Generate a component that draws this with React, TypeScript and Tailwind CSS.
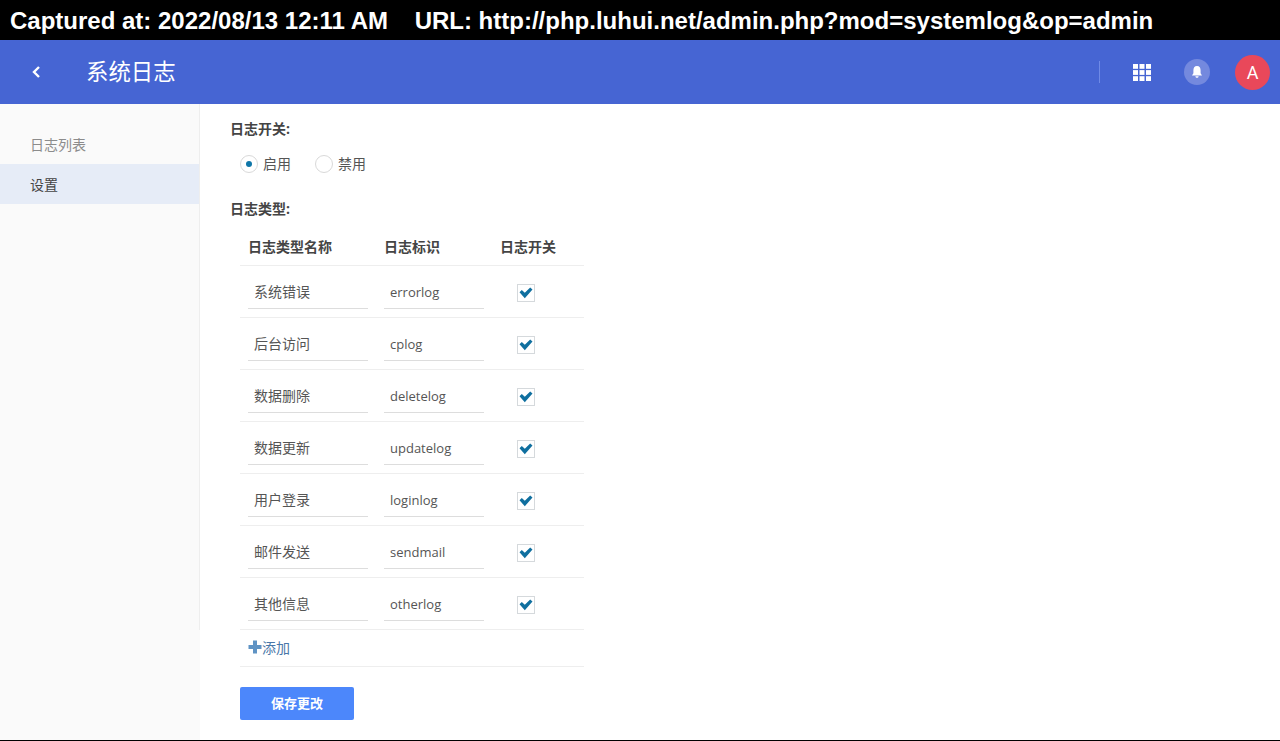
import React from 'react';

const rows = [
  { name: '系统错误', key: 'errorlog' },
  { name: '后台访问', key: 'cplog' },
  { name: '数据删除', key: 'deletelog' },
  { name: '数据更新', key: 'updatelog' },
  { name: '用户登录', key: 'loginlog' },
  { name: '邮件发送', key: 'sendmail' },
  { name: '其他信息', key: 'otherlog' },
];

const font = 'font-["Open_Sans","Noto_Sans_CJK_SC",sans-serif]';

const Check = () => (
  <div className="w-[18px] h-[18px] border border-[#d5d9dc] bg-white flex items-center justify-center">
    <svg width="14" height="12" viewBox="0 0 14 12">
      <path d="M0.5 5.2 L2.8 3 L5.8 5.8 L11.2 0.4 L13.5 2.6 L5.8 11.2 Z" fill="#0f6f9f" />
    </svg>
  </div>
);

const Radio = ({ on, label }: { on?: boolean; label: string }) => (
  <div className="flex items-center gap-[5px]">
    <div className="w-[18px] h-[18px] rounded-full border border-[#d9d9d9] bg-white flex items-center justify-center">
      {on && <div className="w-[6px] h-[6px] rounded-full bg-[#0f76a8]" />}
    </div>
    <span className="text-[14px] leading-[16px] text-[#555]">{label}</span>
  </div>
);

export default function App() {
  return (
    <div className={`h-[741px] overflow-hidden flex flex-col bg-white ${font}`}>
      <div className='h-[40px] shrink-0 bg-black text-white font-["Liberation_Sans",sans-serif] font-bold text-[24px] leading-[42px] pl-[10px] whitespace-pre'>
        Captured at: 2022/08/13 12:11 AM    URL: http://php.luhui.net/admin.php?mod=systemlog&amp;op=admin
      </div>

      <div className="h-[64px] shrink-0 bg-[#4665d3] flex items-center text-white">
        <div className="w-[86px] pl-[30px] shrink-0">
          <svg width="12" height="14" viewBox="0 0 12 14" fill="none" stroke="white" strokeWidth="2.4">
            <path d="M9 2 L4 7 L9 12" />
          </svg>
        </div>
        <div className="text-[22.4px] leading-[28px] flex-1">系统日志</div>
        <div className="w-px h-[22px] bg-[#6f8ae6] mr-[33px]" />
        <svg width="18" height="17" viewBox="0 0 18 17" fill="white" className="mr-[33px]">
          <rect x="0" y="0" width="5" height="4.8" />
          <rect x="6.5" y="0" width="5" height="4.8" />
          <rect x="13" y="0" width="5" height="4.8" />
          <rect x="0" y="6.1" width="5" height="4.8" />
          <rect x="6.5" y="6.1" width="5" height="4.8" />
          <rect x="13" y="6.1" width="5" height="4.8" />
          <rect x="0" y="12.2" width="5" height="4.8" />
          <rect x="6.5" y="12.2" width="5" height="4.8" />
          <rect x="13" y="12.2" width="5" height="4.8" />
        </svg>
        <div className="w-[26px] h-[26px] rounded-full bg-[#7489de] flex items-center justify-center mr-[25px]">
          <svg width="14" height="14" viewBox="0 0 14 14" fill="white">
            <path d="M7 1 C9.6 1 10.6 3 10.6 5.4 L10.6 8.2 L12 10.4 L2 10.4 L3.4 8.2 L3.4 5.4 C3.4 3 4.4 1 7 1 Z" />
            <path d="M5.4 11.2 L8.6 11.2 C8.4 13.2 5.6 13.2 5.4 11.2 Z" />
          </svg>
        </div>
        <div className='w-[35px] h-[35px] rounded-full bg-[#e9485a] flex items-center justify-center mr-[10px] text-[18px] font-["Roboto",sans-serif]'>
          A
        </div>
      </div>

      <div className="flex-1 flex min-h-0">
        <div className="w-[200px] shrink-0 bg-[#fafafa] pt-[20px] text-[14px] relative">
          <div className="h-[40px] pl-[30px] flex items-center text-[#8c8c8c]">日志列表</div>
          <div className="h-[40px] pl-[30px] flex items-center text-[#444] bg-[#e6ecf7]">设置</div>
          <div className="absolute right-0 top-0 h-[526px] w-px bg-[#eeeeee]" />
        </div>

        <div className="flex-1 pl-[30px]">
          <div className="h-[18px] mt-[16px] leading-[18px] text-[14px] font-bold text-[#444]">日志开关:</div>
          <div className="flex items-center gap-[24px] pl-[10px] mt-[17px] h-[18px]">
            <Radio on label="启用" />
            <Radio label="禁用" />
          </div>
          <div className="h-[18px] mt-[27px] leading-[18px] text-[14px] font-bold text-[#444]">日志类型:</div>

          <div className="ml-[10px] w-[344px] mt-[9px]">
            <div className="flex items-center h-[39px] pt-[1px] border-b border-[#eeeeee] text-[14px] font-bold text-[#444]">
              <div className="w-[136px] pl-[8px]">日志类型名称</div>
              <div className="w-[116px] pl-[8px]">日志标识</div>
              <div className="w-[72px] text-center">日志开关</div>
            </div>
            {rows.map((r) => (
              <div key={r.key} className="flex items-center h-[52px] border-b border-[#eeeeee] text-[#555]">
                <div className="w-[136px] pl-[8px]">
                  <div className="w-[120px] h-[34px] pl-[6px] text-[14px] leading-[33px] border-b border-[#dddddd]">{r.name}</div>
                </div>
                <div className="w-[116px] pl-[8px]">
                  <div className="w-[100px] h-[34px] pl-[6px] text-[13px] leading-[35px] border-b border-[#dddddd]">{r.key}</div>
                </div>
                <div className="w-[67px] flex justify-center pt-[3px]">
                  <Check />
                </div>
              </div>
            ))}
            <div className="flex items-center h-[37px] pb-[2px] border-b border-[#eeeeee] pl-[8px] text-[14px] text-[#4a77a8]">
              <svg width="14" height="14" viewBox="0 0 14 14" fill="#5f93c4">
                <path d="M5 0.5 H9 V5 H13.5 V9 H9 V13.5 H5 V9 H0.5 V5 H5 Z" />
              </svg>
              <span>添加</span>
            </div>
            <button className="block mt-[20px] w-[114px] h-[33px] rounded-[2px] bg-[#4c87fb] text-white text-[13px] font-bold">
              保存更改
            </button>
          </div>
        </div>
      </div>
      <div className="h-px shrink-0 bg-black" />
    </div>
  );
}
